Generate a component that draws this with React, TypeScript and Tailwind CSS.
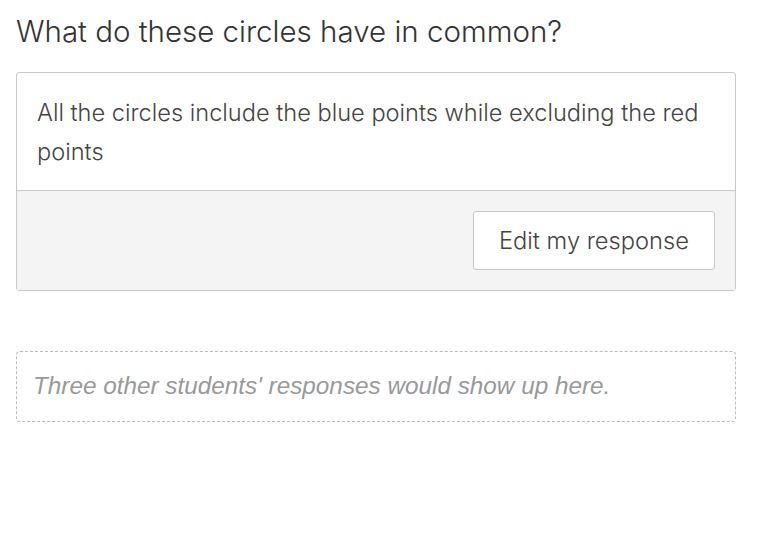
export default function App() {
  return (
    <div className="min-h-screen bg-white pl-4 pt-[10px] font-['Inter',sans-serif] text-[#333]">
      <h1 className="text-[29.5px] font-light leading-[42px] text-[#333]">What do these circles have in common?</h1>

      <div className="mt-[20px] w-[720px] rounded-[3px] border border-[#c8c8c8]">
        <p className="px-5 pt-[20px] pb-[19px] text-[23.6px] font-light leading-[39px] text-[#444]">
          All the circles include the blue points while excluding the red points
        </p>
        <div className="flex justify-end border-t border-[#c8c8c8] bg-[#f4f4f4] p-5">
          <button className="h-[59px] w-[242px] rounded-[3px] border border-[#c8c8c8] bg-white text-[23.7px] font-light text-[#444]">
            Edit my response
          </button>
        </div>
      </div>

      <div className="mt-[60px] flex h-[71px] w-[720px] items-center rounded-[4px] border border-dashed border-[#bbb] px-4">
        <span className="font-['Liberation_Sans',sans-serif] text-[24.3px] italic text-[#999]">
          Three other students' responses would show up here.
        </span>
      </div>
    </div>
  );
}
